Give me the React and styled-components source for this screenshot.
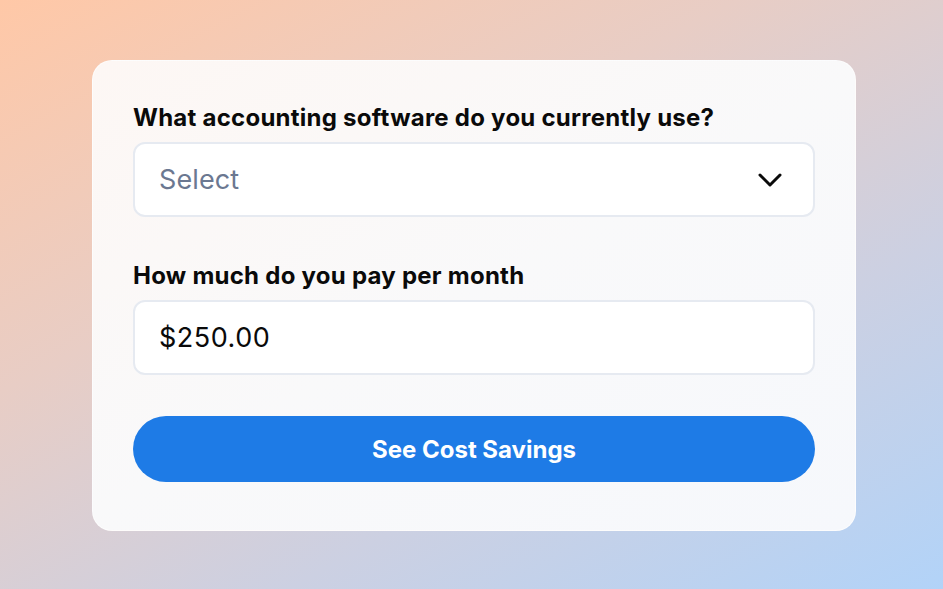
import React from "react";
import styled, { createGlobalStyle } from "styled-components";

const Global = createGlobalStyle`
  html, body { margin: 0; padding: 0; }
  body {
    font-family: Inter, "Noto Sans", sans-serif;
    width: 943px;
    height: 589px;
    overflow: hidden;
  }
`;

const Page = styled.div`
  width: 943px;
  height: 589px;
  box-sizing: border-box;
  padding: 60px 87px 58px 92px;
  background: linear-gradient(152deg, #ffc8a7 0%, #e8cdc5 36%, #ccd0e2 68%, #b2d3f8 100%);
  display: flex;
`;

const Card = styled.div`
  flex: 1;
  box-sizing: border-box;
  padding: 39px 40px 48px 40px;
  border-radius: 20px;
  background: linear-gradient(150deg, #fdf7f4 0%, #f9f9fa 50%, #f6f8fc 100%);
  border: 1px solid rgba(255, 255, 255, 0.6);
  display: flex;
  flex-direction: column;
  gap: 41px;
`;

const Field = styled.div`
  display: flex;
  flex-direction: column;
  gap: 9px;
`;

const Label = styled.label`
  font-family: Inter, "Noto Sans", sans-serif;
  font-weight: 700;
  font-size: 24px;
  line-height: 30px;
  padding-top: 3px;
  color: #0a0a0a;
  letter-spacing: 0.25px;
  white-space: nowrap;
`;

const Box = styled.div`
  height: 75px;
  box-sizing: border-box;
  border: 2px solid #e6eaf1;
  border-radius: 12px;
  background: #ffffff;
  display: flex;
  align-items: center;
  justify-content: space-between;
  padding: 0 31px 0 24px;
  font-family: Inter, "Noto Sans", sans-serif;
  font-size: 27px;
  font-weight: 400;
  letter-spacing: ${(p) => (p.$placeholder ? "0.1px" : "0.5px")};
  color: ${(p) => (p.$placeholder ? "#6b7891" : "#0a0a0a")};
`;

const Button = styled.button`
  height: 66px;
  border: none;
  border-radius: 33px;
  background: #1e7be6;
  color: #ffffff;
  font-family: Inter, "Noto Sans", sans-serif;
  font-weight: 700;
  font-size: 24px;
  cursor: pointer;
`;

const Chevron = () => (
  <svg width="24" height="16" viewBox="0 0 24 16" fill="none">
    <path d="M2 3 L12 13 L22 3" stroke="#0a0a0a" strokeWidth="3" strokeLinecap="round" strokeLinejoin="round" />
  </svg>
);

export default function App() {
  return (
    <>
      <Global />
      <Page>
        <Card>
          <Field>
            <Label>What accounting software do you currently use?</Label>
            <Box $placeholder>
              <span>Select</span>
              <Chevron />
            </Box>
          </Field>
          <Field>
            <Label>How much do you pay per month</Label>
            <Box>
              <span>$250.00</span>
            </Box>
          </Field>
          <Button>See Cost Savings</Button>
        </Card>
      </Page>
    </>
  );
}
